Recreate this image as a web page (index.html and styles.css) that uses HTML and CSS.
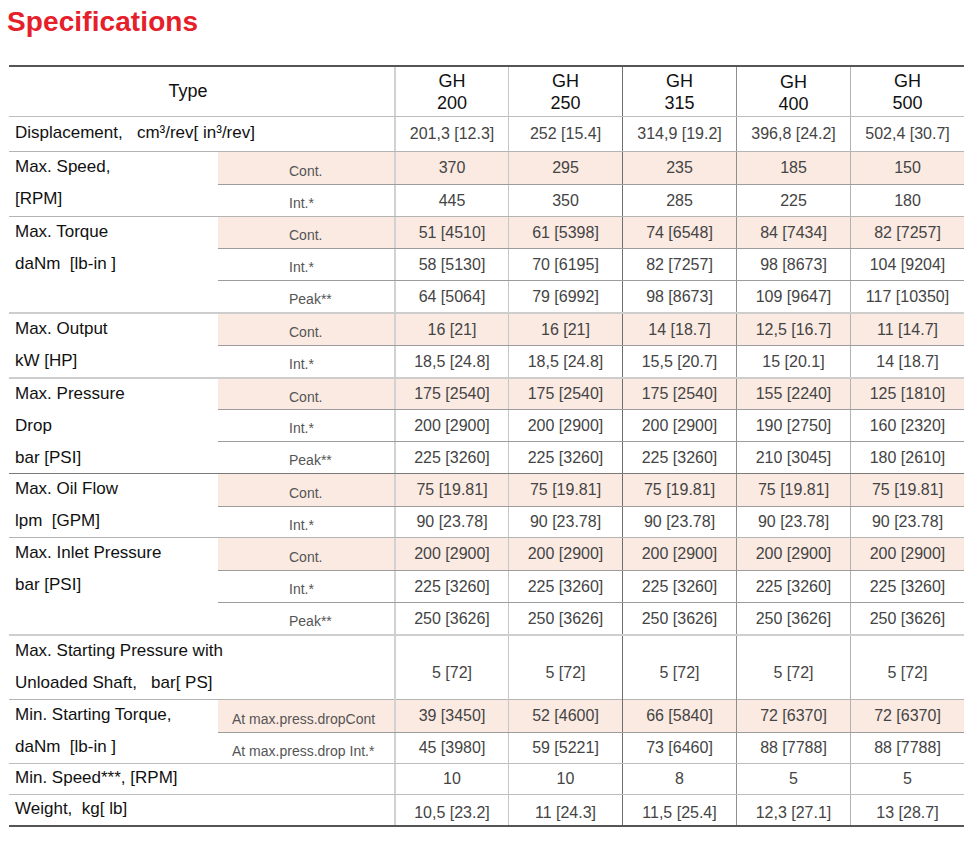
FILE: index.html
```html
<!DOCTYPE html>
<html lang="en">
<head>
<meta charset="utf-8">
<title>Specifications</title>
<link rel="stylesheet" href="styles.css">
</head>
<body>
<div class="sheet">
  <h1 class="title">Specifications</h1>
  <div class="spec">
    <div class="hdr">
      <div class="type">Type</div>
      <div class="v c1">GH<br>200</div>
      <div class="v c2">GH<br>250</div>
      <div class="v c3">GH<br>315</div>
      <div class="v c4 low">GH<br>400</div>
      <div class="v c5">GH<br>500</div>
    </div>

    <div class="single disp">
      <div class="lbl">Displacement,&nbsp;&nbsp; cm³/rev[ in³/rev]</div>
      <div class="v c1">201,3 [12.3]</div>
      <div class="v c2">252 [15.4]</div>
      <div class="v c3">314,9 [19.2]</div>
      <div class="v c4">396,8 [24.2]</div>
      <div class="v c5">502,4 [30.7]</div>
    </div>

    <div class="group">
      <div class="glabel"><span>Max. Speed,</span><span>[RPM]</span></div>
      <div class="subs">
        <div class="sub cont r33"><div class="sl">Cont.</div><div class="v c1">370</div><div class="v c2">295</div><div class="v c3">235</div><div class="v c4">185</div><div class="v c5">150</div></div>
        <div class="sub"><div class="sl">Int.*</div><div class="v c1">445</div><div class="v c2">350</div><div class="v c3">285</div><div class="v c4">225</div><div class="v c5">180</div></div>
      </div>
    </div>

    <div class="group">
      <div class="glabel"><span>Max. Torque</span><span>daNm&nbsp; [lb-in ]</span></div>
      <div class="subs">
        <div class="sub cont"><div class="sl">Cont.</div><div class="v c1">51 [4510]</div><div class="v c2">61 [5398]</div><div class="v c3">74 [6548]</div><div class="v c4">84 [7434]</div><div class="v c5">82 [7257]</div></div>
        <div class="sub"><div class="sl">Int.*</div><div class="v c1">58 [5130]</div><div class="v c2">70 [6195]</div><div class="v c3">82 [7257]</div><div class="v c4">98 [8673]</div><div class="v c5">104 [9204]</div></div>
        <div class="sub"><div class="sl">Peak**</div><div class="v c1">64 [5064]</div><div class="v c2">79 [6992]</div><div class="v c3">98 [8673]</div><div class="v c4">109 [9647]</div><div class="v c5">117 [10350]</div></div>
      </div>
    </div>

    <div class="group thick">
      <div class="glabel"><span>Max. Output</span><span>kW [HP]</span></div>
      <div class="subs">
        <div class="sub cont r33"><div class="sl">Cont.</div><div class="v c1">16 [21]</div><div class="v c2">16 [21]</div><div class="v c3">14 [18.7]</div><div class="v c4">12,5 [16.7]</div><div class="v c5">11 [14.7]</div></div>
        <div class="sub"><div class="sl">Int.*</div><div class="v c1">18,5 [24.8]</div><div class="v c2">18,5 [24.8]</div><div class="v c3">15,5 [20.7]</div><div class="v c4">15 [20.1]</div><div class="v c5">14 [18.7]</div></div>
      </div>
    </div>

    <div class="group thick">
      <div class="glabel"><span>Max. Pressure</span><span>Drop</span><span>bar [PSI]</span></div>
      <div class="subs">
        <div class="sub cont"><div class="sl">Cont.</div><div class="v c1">175 [2540]</div><div class="v c2">175 [2540]</div><div class="v c3">175 [2540]</div><div class="v c4">155 [2240]</div><div class="v c5">125 [1810]</div></div>
        <div class="sub"><div class="sl">Int.*</div><div class="v c1">200 [2900]</div><div class="v c2">200 [2900]</div><div class="v c3">200 [2900]</div><div class="v c4">190 [2750]</div><div class="v c5">160 [2320]</div></div>
        <div class="sub"><div class="sl">Peak**</div><div class="v c1">225 [3260]</div><div class="v c2">225 [3260]</div><div class="v c3">225 [3260]</div><div class="v c4">210 [3045]</div><div class="v c5">180 [2610]</div></div>
      </div>
    </div>

    <div class="group dark">
      <div class="glabel"><span>Max. Oil Flow</span><span>lpm&nbsp; [GPM]</span></div>
      <div class="subs">
        <div class="sub cont r33"><div class="sl">Cont.</div><div class="v c1">75 [19.81]</div><div class="v c2">75 [19.81]</div><div class="v c3">75 [19.81]</div><div class="v c4">75 [19.81]</div><div class="v c5">75 [19.81]</div></div>
        <div class="sub r31"><div class="sl">Int.*</div><div class="v c1">90 [23.78]</div><div class="v c2">90 [23.78]</div><div class="v c3">90 [23.78]</div><div class="v c4">90 [23.78]</div><div class="v c5">90 [23.78]</div></div>
      </div>
    </div>

    <div class="group">
      <div class="glabel"><span>Max. Inlet Pressure</span><span>bar [PSI]</span></div>
      <div class="subs">
        <div class="sub cont r33"><div class="sl">Cont.</div><div class="v c1">200 [2900]</div><div class="v c2">200 [2900]</div><div class="v c3">200 [2900]</div><div class="v c4">200 [2900]</div><div class="v c5">200 [2900]</div></div>
        <div class="sub"><div class="sl">Int.*</div><div class="v c1">225 [3260]</div><div class="v c2">225 [3260]</div><div class="v c3">225 [3260]</div><div class="v c4">225 [3260]</div><div class="v c5">225 [3260]</div></div>
        <div class="sub"><div class="sl">Peak**</div><div class="v c1">250 [3626]</div><div class="v c2">250 [3626]</div><div class="v c3">250 [3626]</div><div class="v c4">250 [3626]</div><div class="v c5">250 [3626]</div></div>
      </div>
    </div>

    <div class="single tall thick-top">
      <div class="lbl lines"><span>Max. Starting Pressure with</span><span>Unloaded Shaft,&nbsp;&nbsp; bar[ PS]</span></div>
      <div class="v c1">5 [72]</div>
      <div class="v c2">5 [72]</div>
      <div class="v c3">5 [72]</div>
      <div class="v c4">5 [72]</div>
      <div class="v c5">5 [72]</div>
    </div>

    <div class="group">
      <div class="glabel"><span>Min. Starting Torque,</span><span>daNm&nbsp; [lb-in ]</span></div>
      <div class="subs">
        <div class="sub cont r33"><div class="sl wide">At max.press.dropCont</div><div class="v c1">39 [3450]</div><div class="v c2">52 [4600]</div><div class="v c3">66 [5840]</div><div class="v c4">72 [6370]</div><div class="v c5">72 [6370]</div></div>
        <div class="sub r31"><div class="sl wide">At max.press.drop Int.*</div><div class="v c1">45 [3980]</div><div class="v c2">59 [5221]</div><div class="v c3">73 [6460]</div><div class="v c4">88 [7788]</div><div class="v c5">88 [7788]</div></div>
      </div>
    </div>

    <div class="single short">
      <div class="lbl">Min. Speed***, [RPM]</div>
      <div class="v c1">10</div>
      <div class="v c2">10</div>
      <div class="v c3">8</div>
      <div class="v c4">5</div>
      <div class="v c5">5</div>
    </div>

    <div class="single short last">
      <div class="lbl">Weight,&nbsp; kg[ lb]</div>
      <div class="v c1 drop">10,5 [23.2]</div>
      <div class="v c2 drop">11 [24.3]</div>
      <div class="v c3 drop">11,5 [25.4]</div>
      <div class="v c4 drop">12,3 [27.1]</div>
      <div class="v c5 drop">13 [28.7]</div>
    </div>
  </div>
</div>
</body>
</html>
```

FILE: styles.css
```css
* { box-sizing: border-box; }

html, body {
  margin: 0;
  padding: 0;
  background: #ffffff;
}

body {
  font-family: "Liberation Sans", Arial, sans-serif;
  color: #111;
}

.sheet {
  width: 977px;
  padding: 8px 0 0 9px;
}

.title {
  margin: 0 0 29px -2px;
  font-size: 28px;
  line-height: 28px;
  font-weight: 700;
  color: #e5202a;
  letter-spacing: 0.1px;
}

.spec {
  width: 955px;
  border-top: 2px solid #555;
  border-bottom: 2px solid #555;
}

/* generic rows */
.hdr,
.single {
  display: grid;
  grid-template-columns: 385px repeat(5, 114px);
}

.hdr {
  height: 49px;
}

.type {
  display: flex;
  align-items: center;
  justify-content: center;
  padding-right: 27px;
  font-size: 18px;
  color: #111;
}

.hdr .v {
  font-size: 18px;
  line-height: 22px;
  color: #111;
  text-align: center;
}

.hdr .low {
  padding-top: 2px;
}

.single {
  border-top: 1px solid #bdbdbd;
}

.disp { height: 35px; }
.tall { height: 65px; }
.short { height: 31px; }

.thick-top {
  border-top: 2px solid #cfcfcf;
}

.lbl {
  display: flex;
  align-items: center;
  padding: 0 0 2px 6px;
  font-size: 17px;
  color: #111;
  white-space: pre;
}

.lbl.lines {
  flex-direction: column;
  align-items: flex-start;
  justify-content: flex-start;
  padding-top: 0;
}

.lbl.lines span,
.glabel span {
  display: block;
  flex-shrink: 0;
  height: 32px;
  line-height: 29px;
}

.tall .v {
  padding-top: 8px;
}

.drop {
  padding-top: 5px;
}

/* value cells */
.v {
  display: flex;
  align-items: center;
  justify-content: center;
  flex-direction: column;
  font-size: 16px;
  color: #444;
  white-space: nowrap;
}

.c1 { border-left: 2px solid #d2d2d2; }
.c2 { border-left: 1px solid #c6c6c6; }
.c3 { border-left: 1px solid #6e6e6e; }
.c4 { border-left: 1px solid #8e8e8e; }
.c5 { border-left: 1px solid #b2b2b2; }

/* grouped rows */
.group {
  display: grid;
  grid-template-columns: 209px 746px;
  border-top: 1px solid #b4b4b4;
}

.group.thick {
  border-top: 2px solid #cdcdcd;
}

.group.dark {
  border-top: 1px solid #7a7a7a;
}

.glabel {
  display: flex;
  flex-direction: column;
  align-self: start;
  height: 0;
  overflow: visible;
  padding-left: 6px;
  font-size: 17px;
  color: #111;
  white-space: pre;
}

.subs {
  display: flex;
  flex-direction: column;
}

.sub {
  display: grid;
  grid-template-columns: 176px repeat(5, 114px);
  height: 32px;
}

.group .sub:first-child {
  height: 31px;
}

.group.thick .sub:first-child {
  height: 30px;
}

.group .sub.r33:first-child {
  height: 32px;
}

.group.thick .sub.r33:first-child {
  height: 31px;
}

.sub + .sub {
  border-top: 1px solid #9c9c9c;
}

.sub.r31 {
  height: 31px;
}

.sub.cont {
  background: #fbeae2;
}

.sl {
  display: flex;
  align-items: center;
  padding: 5px 0 0 71px;
  font-size: 14px;
  color: #555;
  white-space: nowrap;
}

.sl.wide {
  padding-left: 14px;
}
```
